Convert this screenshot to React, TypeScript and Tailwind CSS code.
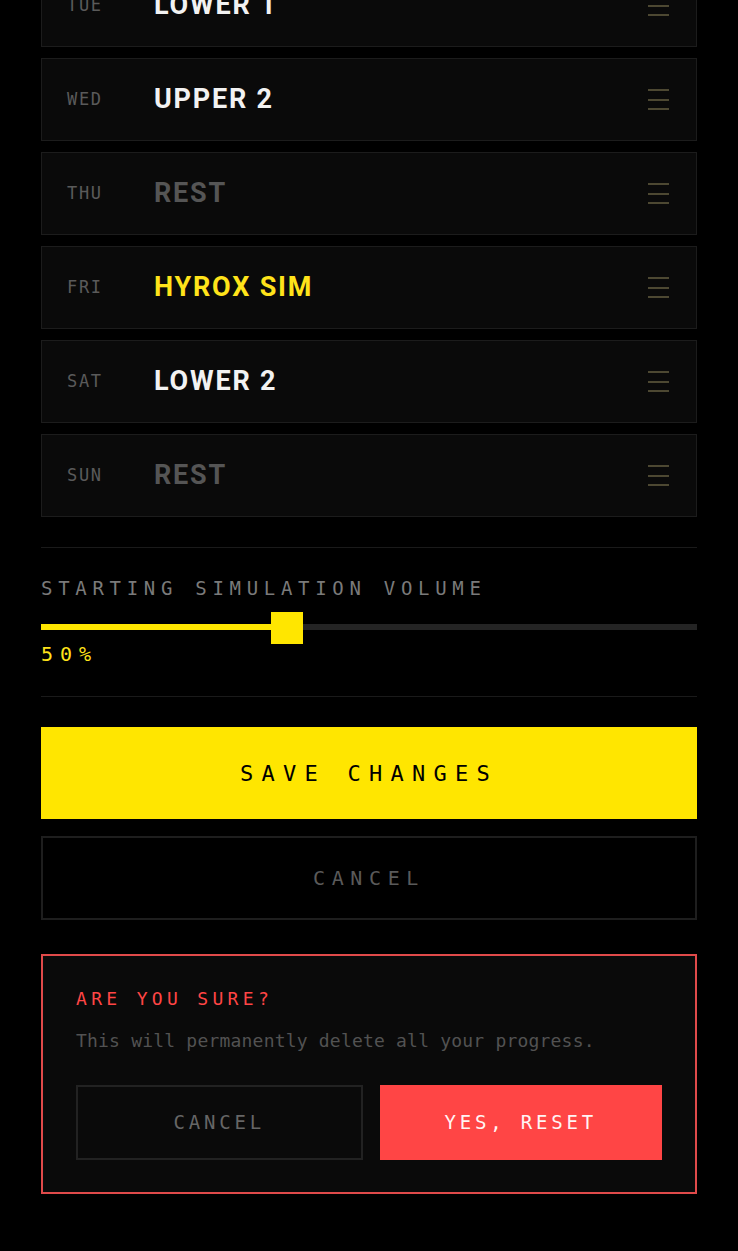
import { Fragment } from 'react'

const MONO = { fontFamily: '"DejaVu Sans Mono", "Liberation Mono", monospace' }

type Day = { day: string; title: string; kind: 'work' | 'rest' | 'sim' }

const DAYS: Day[] = [
  { day: 'TUE', title: 'LOWER 1', kind: 'work' },
  { day: 'WED', title: 'UPPER 2', kind: 'work' },
  { day: 'THU', title: 'REST', kind: 'rest' },
  { day: 'FRI', title: 'HYROX SIM', kind: 'sim' },
  { day: 'SAT', title: 'LOWER 2', kind: 'work' },
  { day: 'SUN', title: 'REST', kind: 'rest' },
]

const TITLE_COLORS: Record<Day['kind'], string> = {
  work: 'text-[#f2f2f2]',
  rest: 'text-[#555555]',
  sim: 'text-[#ffe31a]',
}

function DayRow({ day, title, kind }: Day) {
  return (
    <div className="flex h-[83px] items-center border border-[#1c1c1c] bg-[#0a0a0a] pl-[25px] pr-[27px]">
      <span
        className="w-[87px] shrink-0 text-[17px] leading-none tracking-[0.1em] text-[#5a5a5a]"
        style={MONO}
      >
        {day}
      </span>
      <span
        className={`flex-1 text-[27px] font-bold leading-none tracking-[1.8px] ${TITLE_COLORS[kind]}`}
        style={{ fontFamily: 'Roboto, "Liberation Sans", sans-serif' }}
      >
        {title}
      </span>
      {/* drag handle */}
      <div className="flex w-[21px] flex-col gap-[7.5px]">
        <span className="h-[2px] w-full bg-[#4d4832]" />
        <span className="h-[2px] w-full bg-[#4d4832]" />
        <span className="h-[2px] w-full bg-[#4d4832]" />
      </div>
    </div>
  )
}

export default function App() {
  const volume = 50
  // thumb sits at 37.5% of the track in the original layout
  const thumbPos = 37.5

  return (
    <div className="min-h-[1251px] overflow-hidden bg-black px-[41px]" style={MONO}>
      <div className="-mt-[36px] flex flex-col gap-[11px]">
        {DAYS.map((d) => (
          <Fragment key={d.day}>
            <DayRow {...d} />
          </Fragment>
        ))}
      </div>

      {/* simulation volume */}
      <div className="mt-[30px] border-y border-[#1a1a1a] pb-[32px] pt-[28px]">
        <div className="text-[19px] leading-[24px] tracking-[0.3em] text-[#7a7a7a]">
          STARTING SIMULATION VOLUME
        </div>
        <div className="relative mt-[11px] h-[32px]">
          <div className="absolute left-0 right-0 top-[13px] h-[6px] bg-[#242424]" />
          <div
            className="absolute left-0 top-[13px] h-[6px] bg-[#ffe600]"
            style={{ width: `${thumbPos}%` }}
          />
          <div
            className="absolute top-[1px] h-[32px] w-[32px] -translate-x-1/2 bg-[#ffe600]"
            style={{ left: `${thumbPos}%` }}
          />
        </div>
        <div className="mt-[1px] text-[20px] leading-[20px] tracking-[0.35em] text-[#ffe31a]">
          {volume}%
        </div>
      </div>

      <button className="mt-[30px] flex h-[92px] w-full items-center justify-center bg-[#ffe600] text-[22px] tracking-[0.375em] text-black">
        SAVE CHANGES
      </button>
      <button className="mt-[17px] flex h-[84px] w-full items-center justify-center border-2 border-[#1e1e1e] bg-black text-[20px] tracking-[0.33em] text-[#5a5a5a]">
        CANCEL
      </button>

      {/* reset confirmation */}
      <div className="mt-[34px] border-2 border-[#e04a4a] bg-[#0a0a0a] px-[33px] pb-[32px] pt-[31px]">
        <div className="text-[18px] leading-[24px] tracking-[0.24em] text-[#ff4545]">
          ARE YOU SURE?
        </div>
        <p className="mt-[18px] text-[18px] leading-[24px] tracking-[0.2px] text-[#525252]">
          This will permanently delete all your progress.
        </p>
        <div className="mt-[32px] flex gap-[17px]">
          <button className="flex h-[75px] flex-1 items-center justify-center border-2 border-[#222222] bg-[#0a0a0a] text-[19px] tracking-[0.2em] text-[#666666]">
            CANCEL
          </button>
          <button className="flex h-[75px] flex-1 items-center justify-center bg-[#ff4545] text-[19px] tracking-[0.2em] text-[#fff4f4]">
            YES, RESET
          </button>
        </div>
      </div>
    </div>
  )
}
